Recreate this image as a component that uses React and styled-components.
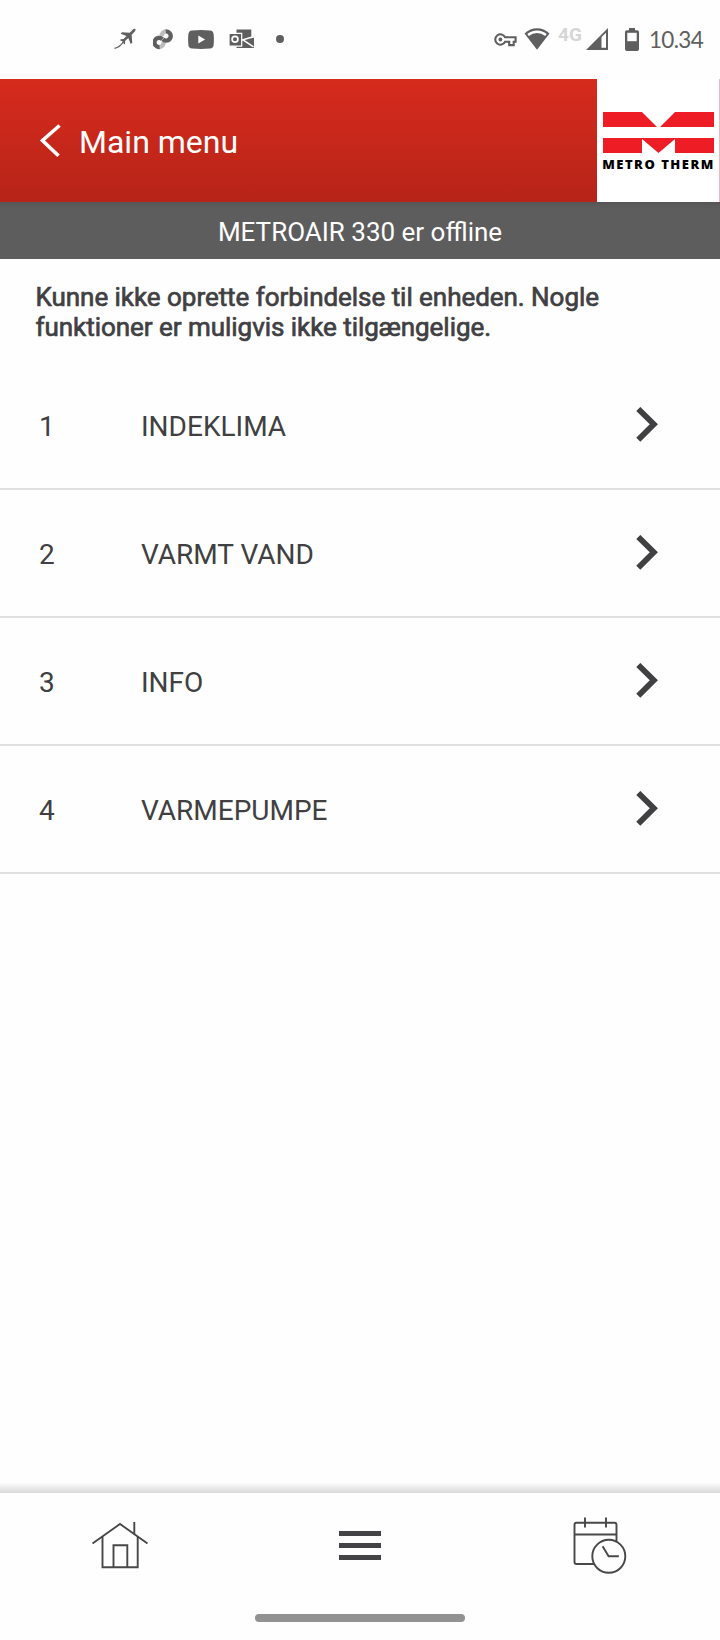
import React from 'react';
import styled, { createGlobalStyle } from 'styled-components';

const menuItems = [
  { id: 1, name: 'INDEKLIMA' },
  { id: 2, name: 'VARMT VAND' },
  { id: 3, name: 'INFO' },
  { id: 4, name: 'VARMEPUMPE' },
];

const PlaneIcon = () => (
  <svg width="24" height="22" viewBox="0 0 24 22" fill="#5f5f5f">
    <path d="M21.3 1.1c.7.5.3 1.5-.7 2.6l-3 3 .7 8-1.6 1.2-2.4-6-3.2 3-.1 2.9-1 .7-1.1-3.1-2.9-1.2.8-1 2.7-.1 3-3.2-5.8-2.2 1.2-1.5 7.8.5 3-2.9c1-1 2-1.200 2.600-.7z" />
    <path d="M9.500 13.500C7.500 17 4.800 19.500.5 20.300" fill="none" stroke="#5f5f5f" strokeWidth="1.300" />
  </svg>
);

const ChainIcon = () => (
  <svg width="20" height="21" viewBox="0 0 20 21" fill="none" strokeWidth="4.300">
    <path d="M8.600 7.500A4.600 4.600 0 0 1 13.200 2.400" stroke="#bdbdbd" />
    <path d="M10.600 12.700A4.600 4.600 0 0 1 6.200 18" stroke="#bdbdbd" />
    <path d="M12.800 2.400A4.600 4.600 0 1 1 9.800 10.200" stroke="#5f5f5f" />
    <path d="M6.600 18A4.600 4.600 0 1 1 9.400 10.200" stroke="#5f5f5f" />
  </svg>
);

const VideoIcon = () => (
  <svg width="26" height="19" viewBox="0 0 26 19">
    <path d="M4 .4Q13-.4 22 .4 25.200.7 25.600 4q.6 5.500 0 11-.4 3.300-3.600 3.600-9 .8-18 0Q.8 18.300.4 15q-.6-5.500 0-11Q.8.7 4 .4z" fill="#5f5f5f" />
    <path d="M10.300 5.600v7.900l6.800-4z" fill="#fff" />
  </svg>
);

const MailIcon = () => (
  <svg width="25" height="20" viewBox="0 0 25 20">
    <path d="M7.500.5h14.800v9L25 8.600V19H7.500z" fill="#5f5f5f" />
    <path d="M12.500 11.300 25 7.500M14 10.800l10.500 7" stroke="#fff" strokeWidth="1.500" />
    <path d="M0 4.300h12.700v12.900H0z" fill="#5f5f5f" stroke="#fff" strokeWidth="1.200" />
    <circle cx="6" cy="10.300" r="2.900" fill="none" stroke="#fff" strokeWidth="1.700" />
  </svg>
);

const KeyIcon = () => (
  <svg width="23" height="14" viewBox="0 0 23 14" fill="none" stroke="#5f5f5f" strokeWidth="2.100">
    <path d="M11.100 4.200h10.500v4.600h-1.900v3.300h-4.500V8.800h-4.100A5.200 5.200 0 1 1 11.100 4.200z" />
    <circle cx="6.400" cy="6.500" r="1.900" fill="#5f5f5f" stroke="none" />
  </svg>
);

const WifiIcon = () => (
  <svg width="26" height="22" viewBox="0 0 26 22">
    <path d="M.5 5.500Q6 .2 13 .2t12.500 5.300L13 21.800z" fill="#5f5f5f" />
    <path d="M3.300 6Q7.500 2.400 13 2.400T22.700 6l-1.500 1.900Q17.500 5 13 5T4.800 7.900z" fill="#fff" />
  </svg>
);

const SignalIcon = () => (
  <svg width="22" height="22" viewBox="0 0 22 22">
    <path d="M22 0v22H0z" fill="#5f5f5f" />
    <path d="M15.500 9 20 4.800v15h-4.500z" fill="#fff" />
  </svg>
);

const BatteryIcon = () => (
  <svg width="14" height="23" viewBox="0 0 14 23">
    <path d="M4 0h6v2.200h2.200Q14 2.200 14 4v17q0 2-1.800 2H1.800Q0 23 0 21V4q0-1.800 1.800-1.800H4z" fill="#5f5f5f" />
    <path d="M2.300 4.800h9.400v8.400H2.300z" fill="#fff" />
  </svg>
);

const BackIcon = () => (
  <svg width="22" height="34" viewBox="0 0 22 34" fill="none" stroke="#fff" strokeWidth="3.600">
    <path d="M20.500 1.500 3.500 16.500l16 15.300" />
  </svg>
);

const ArrowIcon = () => (
  <svg width="22" height="36" viewBox="0 0 22 36" fill="none" stroke="#404042" strokeWidth="5.800">
    <path d="M2.300 2 17.800 17.300 2.300 32.800" />
  </svg>
);

const LogoMark = () => (
  <svg width="111" height="41" viewBox="0 0 111 41" fill="#ee1c25">
    <path d="M0 0h39l15 15H0zM72 0h39v15H57z" />
    <path d="M0 26h111v15H72V27L55.500 41 39 27v14H0z" />
  </svg>
);

const HomeIcon = () => (
  <svg width="58" height="48" viewBox="0 0 58 48" fill="none" stroke="#48484a" strokeWidth="1.900">
    <path d="M1.500 21.500 29 2l27.500 19.500" />
    <path d="M11.500 14.500v30.800h35.200V14.500M43.300 0v12.500" />
    <path d="M22.500 45V23.300h13.800V45" />
  </svg>
);

const ScheduleIcon = () => (
  <svg width="54" height="58" viewBox="0 0 54 58" fill="none" stroke="#48484a" strokeWidth="1.900">
    <path d="M21.500 47H3.500Q1.500 47 1.500 45V8Q1.500 5.700 3.500 5.700h38Q43.500 5.700 43.500 8v16.500" />
    <path d="M1.500 17.500h42M12 .5v10M33 .5v10" />
    <circle cx="35.800" cy="39.300" r="16.500" />
    <path d="M29.600 29.300l6 10h10.200" />
  </svg>
);

const App = () => {
  return (
    <Screen>
      <GlobalStyle />
      <StatusBar>
        <Notifications>
          <PlaneIcon />
          <ChainIcon />
          <VideoIcon />
          <MailIcon />
          <Dot />
        </Notifications>
        <SystemIcons>
          <KeyIcon />
          <WifiIcon />
          <Network>4G</Network>
          <SignalIcon />
          <BatteryIcon />
          <Clock>10.34</Clock>
        </SystemIcons>
      </StatusBar>

      <Header>
        <BackButton>
          <BackIcon />
          <span>Main menu</span>
        </BackButton>
        <Logo>
          <LogoMark />
          <LogoText>METRO THERM</LogoText>
        </Logo>
      </Header>

      <OfflineBar>METROAIR 330 er offline</OfflineBar>
      <Message>
        Kunne ikke oprette forbindelse til enheden. Nogle
        <br />
        funktioner er muligvis ikke tilgængelige.
      </Message>

      <MenuList>
        {menuItems.map((item) => (
          <MenuRow key={item.id}>
            <span className="number">{item.id}</span>
            <span className="name">{item.name}</span>
            <ArrowIcon />
          </MenuRow>
        ))}
      </MenuList>

      <NavShadow />
      <BottomNav>
        <NavButton>
          <HomeIcon />
        </NavButton>
        <NavButton>
          <Burger>
            <i />
            <i />
            <i />
          </Burger>
        </NavButton>
        <NavButton>
          <ScheduleIcon />
        </NavButton>
      </BottomNav>
      <GestureArea>
        <GestureBar />
      </GestureArea>
    </Screen>
  );
};
export default App;

const GlobalStyle = createGlobalStyle`
  * {
    box-sizing: border-box;
  }
  body {
    margin: 0;
    background: #fefefe;
  }
  svg {
    display: block;
    flex: none;
  }
`;

const Screen = styled.div`
  display: flex;
  flex-direction: column;
  width: 720px;
  height: 1640px;
  overflow: hidden;
  background: #fefefe;
  color: #404042;
  font-family: Roboto, sans-serif;
`;

const StatusBar = styled.div`
  display: flex;
  justify-content: space-between;
  flex: none;
  height: 79px;
  padding: 28px 18px 0 114px;
`;

const Notifications = styled.div`
  display: flex;
  align-items: center;
  height: 22px;
  gap: 15px;
`;

const Dot = styled.span`
  width: 8px;
  height: 8px;
  margin-left: 7px;
  border-radius: 50%;
  background: #5f5f5f;
`;

const SystemIcons = styled.div`
  display: flex;
  align-items: flex-start;
  height: 23px;

  svg:nth-child(1) {
    margin: 5px 7px 0 0;
  }
  svg:nth-child(4) {
    margin-right: 17px;
  }
`;

const Network = styled.span`
  width: 26px;
  margin: -4px 2px 0 8px;
  font-size: 19px;
  line-height: 22px;
  font-weight: 700;
  color: #d6d6d6;
`;

const Clock = styled.span`
  width: 53px;
  margin-left: 10px;
  font-family: Lato, sans-serif;
  font-size: 22.5px;
  line-height: 24px;
  letter-spacing: -0.7px;
  color: #5f5f5f;
`;

const Header = styled.header`
  display: flex;
  justify-content: space-between;
  flex: none;
  height: 123px;
  background: linear-gradient(#d62b1d, #b72418);
`;

const BackButton = styled.div`
  display: flex;
  align-items: center;
  gap: 18px;
  padding-left: 39px;
  color: #fff;
  font-size: 32px;
  line-height: 38px;

  span {
    padding-top: 2px;
  }
`;

const Logo = styled.div`
  display: flex;
  flex-direction: column;
  align-items: center;
  width: 123px;
  padding-top: 33px;
  background: #fff;
  border-right: 1px solid #edb9c0;
`;

const LogoText = styled.div`
  margin: 4px 0 0 1px;
  font-family: "Open Sans", sans-serif;
  font-size: 13px;
  line-height: 15px;
  font-weight: 800;
  letter-spacing: 1.5px;
  white-space: nowrap;
  color: #000;
`;

const OfflineBar = styled.div`
  flex: none;
  height: 57px;
  background: linear-gradient(#555 0, #5d5d5d 6px);
  color: #fff;
  font-size: 26px;
  line-height: 60px;
  text-align: center;
`;

const Message = styled.p`
  flex: none;
  height: 103px;
  margin: 0;
  padding: 23px 35px 0 35.5px;
  font-size: 26px;
  line-height: 30px;
  letter-spacing: -0.04px;
  -webkit-text-stroke: 0.7px #404042;
`;

const MenuList = styled.div`
  flex: 1;
`;

const MenuRow = styled.div`
  display: flex;
  align-items: center;
  height: 128px;
  padding: 0 62px 0 39px;
  border-bottom: 2px solid #e0e0e0;
  font-size: 28px;

  span {
    padding-top: 2px;
  }
  .number {
    width: 102px;
  }
  .name {
    flex: 1;
  }
`;

const NavShadow = styled.div`
  flex: none;
  height: 10px;
  background: linear-gradient(#fbfbfb, #d9d9d9);
`;

const BottomNav = styled.nav`
  display: flex;
  flex: none;
  height: 105px;
`;

const NavButton = styled.div`
  display: flex;
  align-items: center;
  justify-content: center;
  flex: 1;
`;

const Burger = styled.div`
  display: flex;
  flex-direction: column;
  gap: 7px;
  padding-bottom: 1px;

  i {
    width: 42px;
    height: 5px;
    background: #434345;
  }
`;

const GestureArea = styled.div`
  display: flex;
  justify-content: center;
  flex: none;
  height: 42px;
  padding-top: 16px;
`;

const GestureBar = styled.div`
  width: 210px;
  height: 8px;
  border-radius: 4px;
  background: #929292;
`;
